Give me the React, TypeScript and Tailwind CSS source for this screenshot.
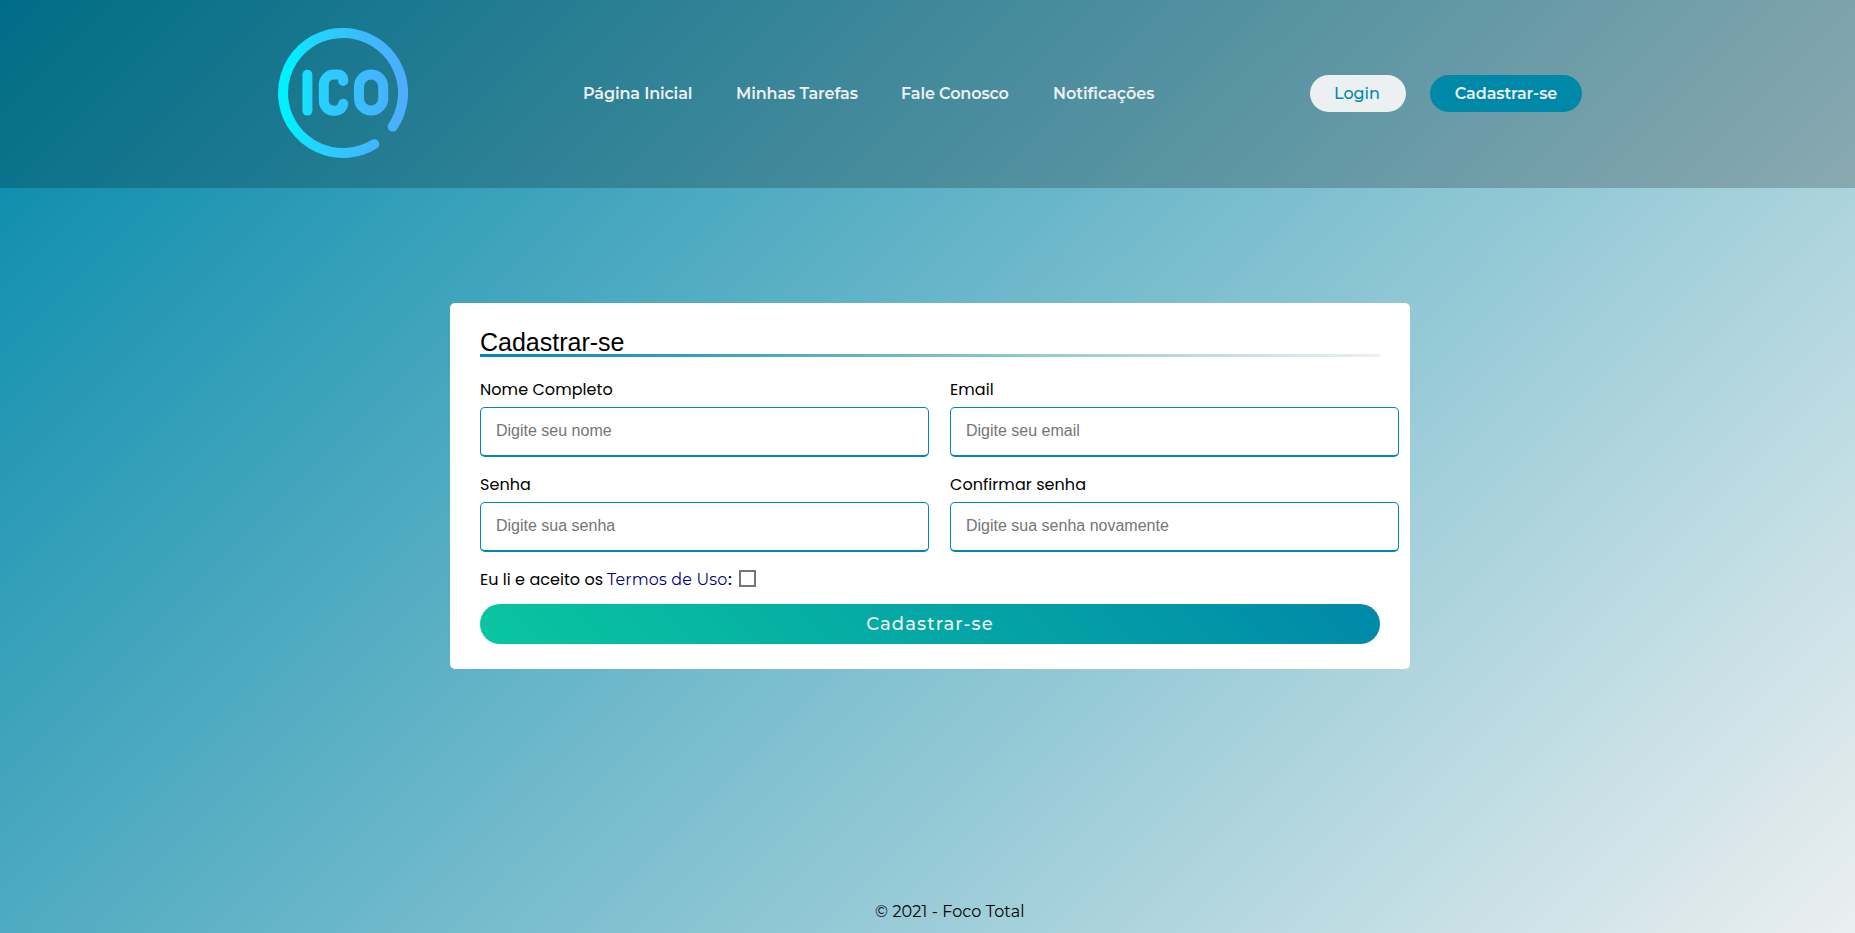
const heading = "font-['Montserrat','Inter',sans-serif]";
const label = "font-['Poppins','Inter',sans-serif]";

function Logo() {
  return (
    <svg width="130" height="130" viewBox="0 0 130 130" fill="none" stroke="url(#brand)" strokeWidth="10" strokeLinecap="round">
      <defs>
        <linearGradient id="brand" gradientUnits="userSpaceOnUse" x1="0" y1="65" x2="130" y2="65">
          <stop offset="0" stopColor="#00f2fe" />
          <stop offset="0.1" stopColor="#03effe" />
          <stop offset="0.3" stopColor="#24d2fe" />
          <stop offset="0.7" stopColor="#3fb8ff" />
          <stop offset="1" stopColor="#4facfe" />
        </linearGradient>
      </defs>
      <path d="M114.7 98.6A60 60 0 1 0 96.2 116.2" />
      <path d="M29.4 46.8V82.6" />
      <path d="M65.2 53V51.5A5 5 0 0 0 60.2 46.5H55.8A10 10 0 0 0 45.8 56.5V72.8A10 10 0 0 0 55.8 82.8H57A8.2 8.2 0 0 0 65.2 75.8" />
      <rect x="81" y="46.6" width="24.2" height="36" rx="12.1" />
    </svg>
  );
}

function Field({ text, hint, type = "text" }: { text: string; hint: string; type?: string }) {
  return (
    <div className="flex w-[449px] flex-col">
      <label className={`${label} flex h-[27px] items-center pt-0.5 text-base tracking-[0.06px] whitespace-nowrap text-black`}>{text}</label>
      <input
        type={type}
        placeholder={hint}
        className="mt-[5px] h-[50px] w-[449px] rounded-[5px] border border-b-2 border-[#0088a9] bg-white px-[15px] pb-[2px] font-['Liberation_Sans',Arial,sans-serif] text-base text-black placeholder:text-[#757575]"
      />
    </div>
  );
}

export default function App() {
  return (
    <div className="flex h-[933px] w-full flex-col bg-[linear-gradient(135deg,#0088a9,#edf0f1_101%)]">
      <header className="flex h-[188px] shrink-0 items-center bg-black/20 pr-[273px] pb-0.5 pl-[278px]">
        <Logo />
        <nav className={`${heading} ml-[175px] flex pt-0.5 text-base font-semibold tracking-[-0.11px] whitespace-nowrap text-[#edf0f1]`}>
          <a className="w-[153px]">Página Inicial</a>
          <a className="w-[165px]">Minhas Tarefas</a>
          <a className="w-[152px]">Fale Conosco</a>
          <a className="w-[101px] tracking-[-0.05px]">Notificações</a>
        </nav>
        <div className={`${heading} ml-auto flex gap-6 text-base whitespace-nowrap`}>
          <button className="h-[37px] w-24 rounded-full bg-[#edf0f1] pt-0.5 pr-2 pl-1.5 font-medium text-[#0088a9]">Login</button>
          <button className="h-[37px] w-[152px] rounded-full bg-[#0088a9] pt-0.5 font-semibold tracking-[-0.1px] text-[#edf0f1]">Cadastrar-se</button>
        </div>
      </header>

      <main className="flex grow flex-col pt-[115px] pl-[450px]">
        <form className="h-[366px] w-[960px] rounded-[5px] bg-white px-[30px] pt-6">
          <h1 className="flex h-[27px] items-center pt-1 font-['Liberation_Sans',Arial,sans-serif] text-[25px] leading-none text-black">Cadastrar-se</h1>
          <div className="h-[3px] bg-[linear-gradient(90deg,#0088a9,#edf0f1)]" />
          <div className="mt-[18px] grid w-[919px] grid-cols-2 gap-x-[21px] gap-y-[13px]">
            <Field text="Nome Completo" hint="Digite seu nome" />
            <Field text="Email" hint="Digite seu email" />
            <Field text="Senha" hint="Digite sua senha" type="password" />
            <Field text="Confirmar senha" hint="Digite sua senha novamente" type="password" />
          </div>
          <div className="mt-[13px] flex h-[27px] items-center text-base whitespace-nowrap">
            <span className={`${label} w-[127px] pt-0.5 tracking-[0.04px] text-black`}>Eu li e aceito os</span>
            <a className={`${heading} w-[120px] pt-0.5 tracking-[0.15px] text-[#000080]`}>Termos de Uso</a>
            <span className={`${label} w-3 pt-0.5 pl-px font-medium text-black`}>:</span>
            <input type="checkbox" className="size-[17px] appearance-none border-2 border-[#757575] bg-white" />
          </div>
          <button type="button" className={`${heading} mt-3 h-10 w-[900px] rounded-full bg-[linear-gradient(45deg,#09c6a0,#0088a9)] text-lg font-medium tracking-[1.1px] text-[#edf0f1]`}>
            Cadastrar-se
          </button>
        </form>
      </main>

      <footer className={`${heading} flex h-[43px] shrink-0 items-center pl-[875px] text-base tracking-[0.12px] whitespace-nowrap text-black`}>© 2021 - Foco Total</footer>
    </div>
  );
}
